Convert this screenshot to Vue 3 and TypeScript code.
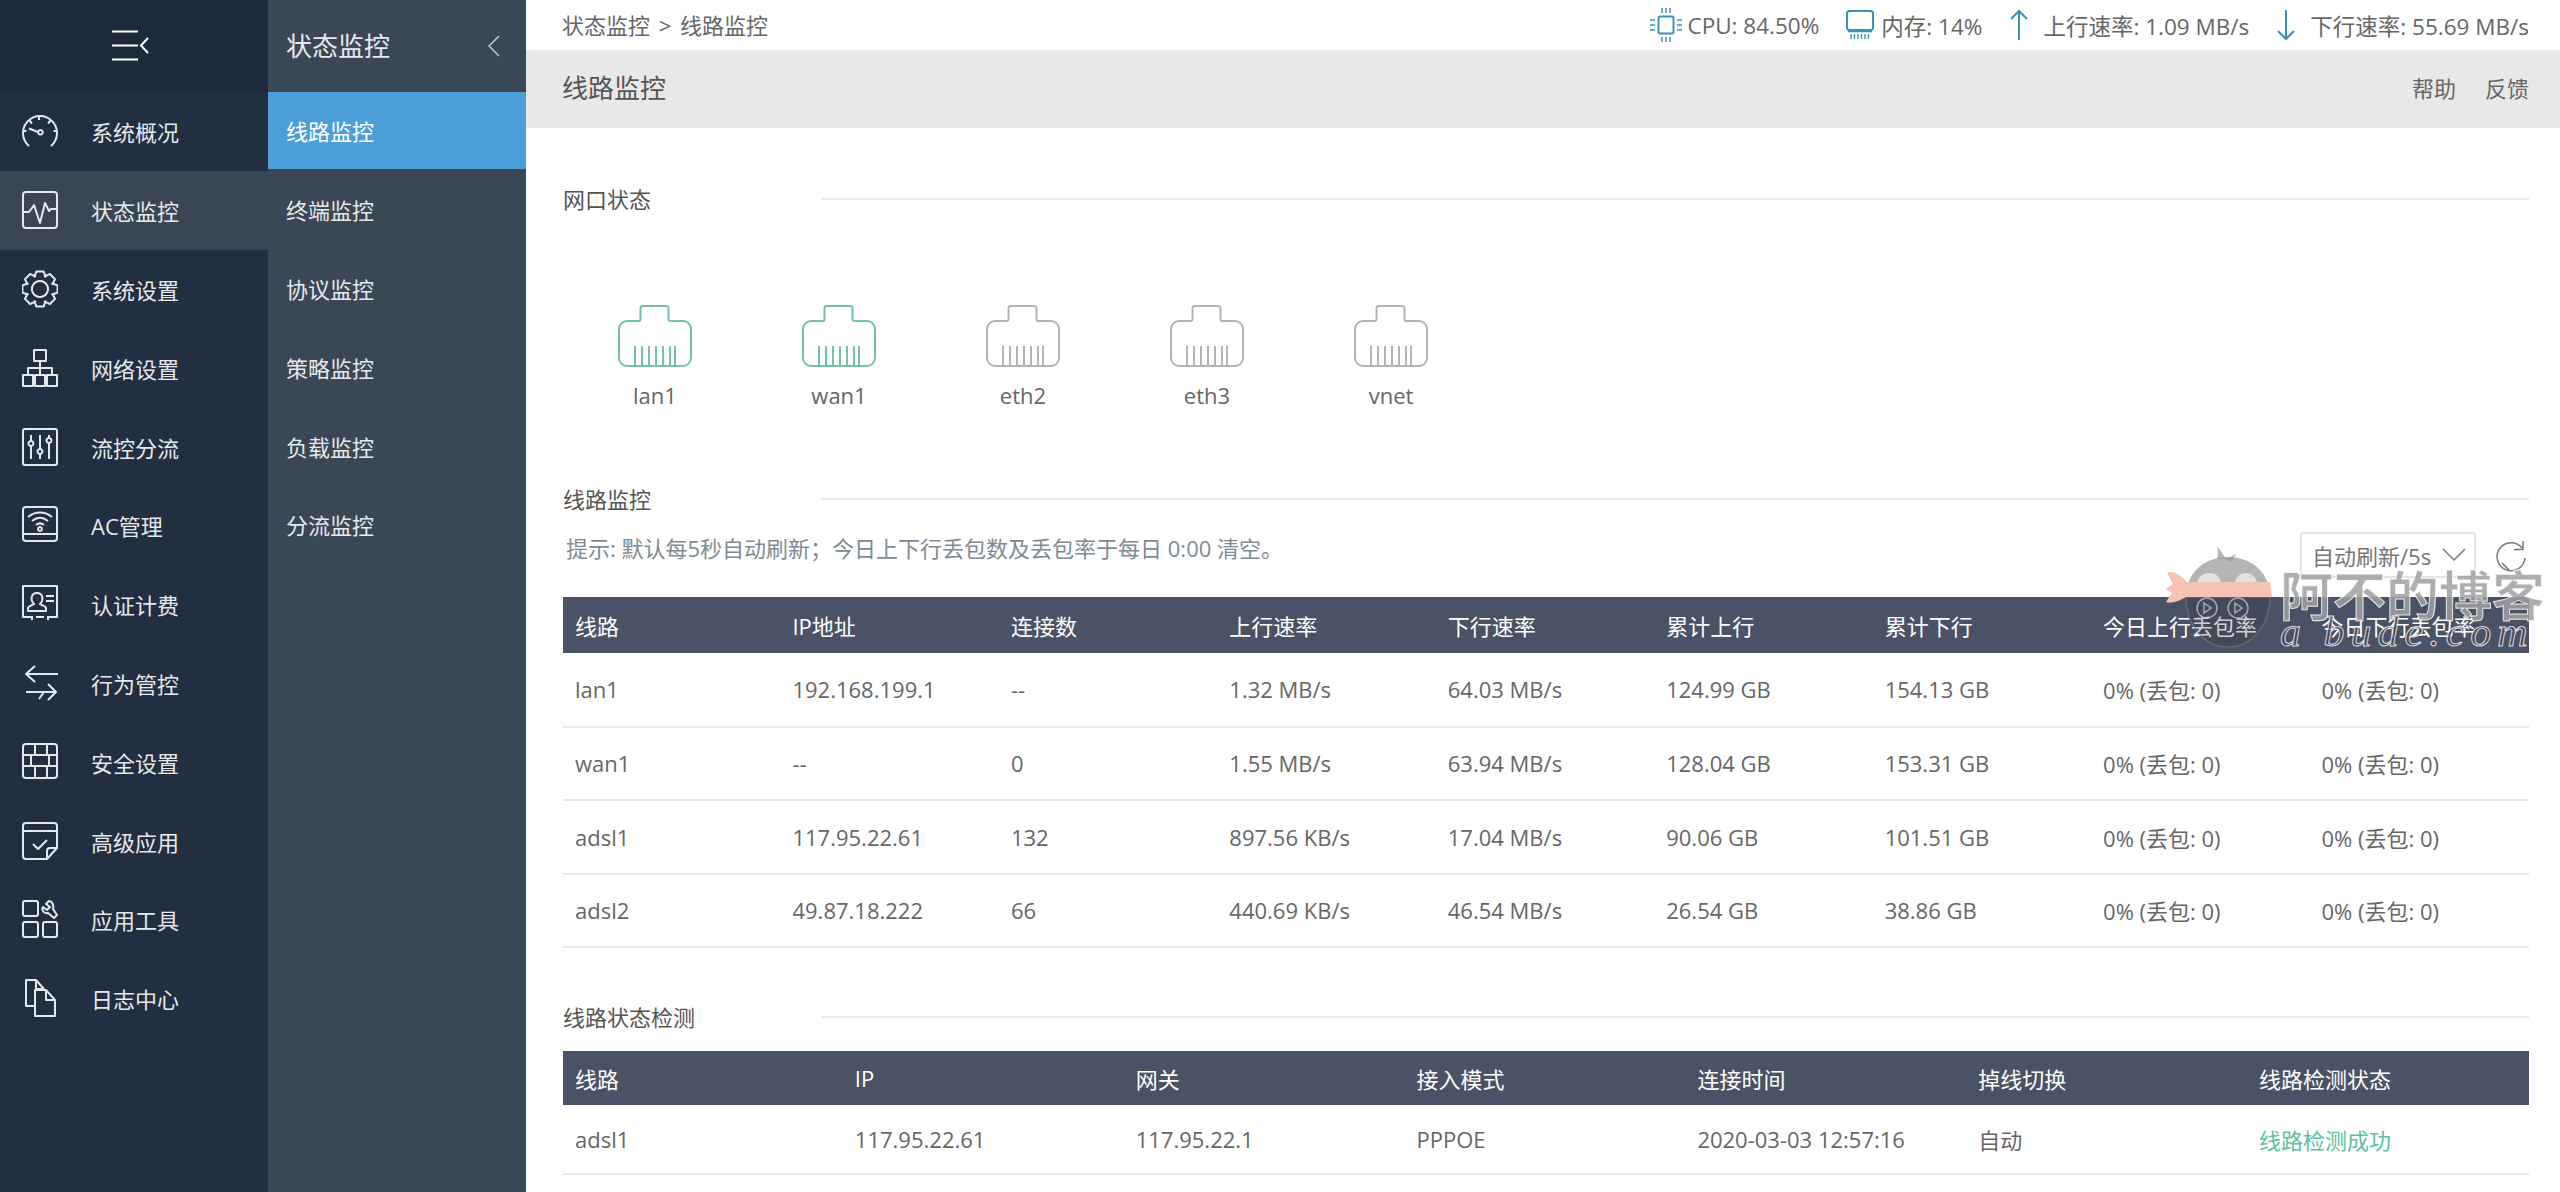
<template>
  <div class="app">
    <aside class="nav">
      <div class="nav-head">
        <svg class="toggle" viewBox="0 0 38 32" width="38" height="32">
          <path d="M0 1.5h26M0 15.5h26M0 29.5h26M36 8l-7 7.5 7 7.5" />
        </svg>
      </div>
      <ul class="nav-list">
        <li v-for="item in navItems" :key="item.label" class="nav-item" :class="{ active: item.label === '状态监控' }">
          <svg class="nav-icon" viewBox="0 0 36 38" width="36" height="38">
            <path v-for="(d, i) in item.icon" :key="i" :d="d" />
          </svg>
          <span>{{ item.label }}</span>
        </li>
      </ul>
    </aside>

    <aside class="subnav">
      <div class="subnav-head">
        <span>状态监控</span>
        <svg viewBox="0 0 12 22" width="12" height="22"><path d="M11 1 1 11l10 10" /></svg>
      </div>
      <ul class="subnav-list">
        <li v-for="(item, i) in subItems" :key="item" class="subnav-item" :class="{ active: i === 0 }">{{ item }}</li>
      </ul>
    </aside>

    <main class="main">
      <header class="topbar">
        <div class="crumb">状态监控 &gt; 线路监控</div>
        <div class="stats">
          <div class="stat stat-cpu">
            <svg viewBox="0 0 32 36" width="32" height="36">
              <path d="M10 9.5h12a1.5 1.5 0 0 1 1.5 1.5v14a1.5 1.5 0 0 1-1.5 1.5H10A1.5 1.5 0 0 1 8.5 25V11A1.5 1.5 0 0 1 10 9.5z" stroke-width="2" />
              <path d="M12 1v5M16 1v5M20 1v5M12 30v5M16 30v5M20 30v5M0 13h5M0 18h5M0 23h5M27 13h5M27 18h5M27 23h5" stroke-width="1.5" />
            </svg>
            <span>CPU: 84.50%</span>
          </div>
          <div class="stat stat-mem">
            <svg viewBox="0 0 28 32" width="28" height="32">
              <rect x="1" y="2" width="26" height="19" rx="2.5" stroke-width="2" />
              <path d="M2 22.5h24M5 25v5M8.5 25v5M12 25v5M15.5 25v5M19 25v5M22.5 25v5" stroke-width="1.3" />
            </svg>
            <span>内存: 14%</span>
          </div>
          <div class="stat stat-rate">
            <svg viewBox="0 0 20 32" width="20" height="32"><path d="M10 31V2M2 10l8-8 8 8" stroke-width="2" /></svg>
            <span>上行速率: 1.09 MB/s</span>
          </div>
          <div class="stat stat-rate">
            <svg viewBox="0 0 20 32" width="20" height="32"><path d="M10 1v29M2 22l8 8 8-8" stroke-width="2" /></svg>
            <span>下行速率: 55.69 MB/s</span>
          </div>
        </div>
      </header>

      <div class="titlebar">
        <h1>线路监控</h1>
        <div class="links"><a>帮助</a><a>反馈</a></div>
      </div>

      <div class="content">
        <section class="section-ports">
          <div class="sec-title"><span>网口状态</span><i></i></div>
          <div class="ports">
            <div v-for="p in ports" :key="p.name" class="port" :class="{ up: p.up }">
              <svg viewBox="0 0 74 62" width="74" height="62">
                <path d="M9 16h11.5a2 2 0 0 0 2-2V3a2 2 0 0 1 2-2h24a2 2 0 0 1 2 2v11a2 2 0 0 0 2 2H65a8 8 0 0 1 8 8v29a8 8 0 0 1-8 8H9a8 8 0 0 1-8-8V24a8 8 0 0 1 8-8z" />
                <path d="M17 41v20M24 41v20M31 41v20M38 41v20M45 41v20M52 41v20M57 41v20" />
              </svg>
              <span>{{ p.name }}</span>
            </div>
          </div>
        </section>

        <section class="section-lines">
          <div class="sec-title"><span>线路监控</span><i></i></div>
          <div class="notice">
            <span>提示: 默认每5秒自动刷新；今日上下行丢包数及丢包率于每日 0:00 清空。</span>
            <div class="controls">
              <div class="select">
                <span>自动刷新/5s</span>
                <svg viewBox="0 0 24 14" width="24" height="14"><path d="M1 1l11 11L23 1" /></svg>
              </div>
              <svg class="refresh" viewBox="0 0 36 36" width="36" height="36">
                <path d="M29 9A14 14 0 1 0 32 19M30 2v8.5h-9M9 24l7 7" />
              </svg>
            </div>
          </div>
          <table>
            <thead>
              <tr><th v-for="h in lineHead" :key="h">{{ h }}</th></tr>
            </thead>
            <tbody>
              <tr v-for="row in lineRows" :key="row[0]">
                <td v-for="(c, i) in row" :key="i">{{ c }}</td>
              </tr>
            </tbody>
          </table>
        </section>

        <section class="section-check">
          <div class="sec-title"><span>线路状态检测</span><i></i></div>
          <table class="check-table">
            <thead>
              <tr><th v-for="h in checkHead" :key="h">{{ h }}</th></tr>
            </thead>
            <tbody>
              <tr>
                <td>adsl1</td>
                <td>117.95.22.61</td>
                <td>117.95.22.1</td>
                <td>PPPOE</td>
                <td>2020-03-03 12:57:16</td>
                <td>自动</td>
                <td class="ok">线路检测成功</td>
              </tr>
            </tbody>
          </table>
        </section>
      </div>

      <div class="watermark">
        <svg viewBox="0 0 112 104" width="112" height="104">
          <path class="wm-hair" d="M60 14C57 9 54 5 51 1c1 4 1 8 0 13zM60 14l10-5-5 8z" />
          <path class="wm-head" d="M20 52C20 28 38 12 62 12s42 16 42 40z" />
          <path class="wm-low" d="M20 52c0 28 18 50 42 50s42-22 42-50z" />
          <path class="wm-band" d="M20 37h84l2 15H20z" />
          <path class="wm-band" d="M1 28c6-3 13 2 20 9l-1 15c-7 4-15 7-20 5l6-9-7-4 8-5z" />
          <path class="wm-eye" d="M31 37c2-6 7-9 13-9s10 4 11 9zM69 37c1-5 5-9 11-9 5 0 10 4 11 9z" />
          <circle class="wm-ring" cx="41" cy="63" r="10" />
          <circle class="wm-ring" cx="72" cy="63" r="10" />
          <path class="wm-ring" d="M38 58l7 5-7 5zM69 58l7 5-7 5z" />
        </svg>
        <div class="wm-text">
          <div class="wm-cn">阿不的博客</div>
          <div class="wm-en">a bude.com</div>
        </div>
      </div>
    </main>
  </div>
</template>

<script setup lang="ts">
// gear outline for the settings entry, 8 teeth round the centre of the icon box
const gearPath = (): string => {
  const points: string[] = []
  for (let i = 0; i < 8; i++) {
    const a = (i * Math.PI) / 4
    const spots: [number, number][] = [
      [13.5, -0.42],
      [18, -0.2],
      [18, 0.2],
      [13.5, 0.42],
    ]
    for (const [r, o] of spots) {
      const x = 18 + r * Math.cos(a + o)
      const y = 19 + r * Math.sin(a + o)
      points.push(`${x.toFixed(1)} ${y.toFixed(1)}`)
    }
  }
  return `M${points.join('L')}z`
}

const navItems: { label: string; icon: string[] }[] = [
  {
    label: '系统概况',
    icon: [
      'M7 34A17 17 0 1 1 29 34',
      'M17 4v4M7.5 8.5l2.5 3M28.5 8.5l-2.5 3M1.5 19h3M31.5 19h3',
      'M7 16.5l9 3.5',
      'M18.5 18a2.3 2.3 0 1 1-.1 0z',
    ],
  },
  {
    label: '状态监控',
    icon: [
      'M4 1h28a3 3 0 0 1 3 3v30a3 3 0 0 1-3 3H4a3 3 0 0 1-3-3V4a3 3 0 0 1 3-3z',
      'M1 21h6l5-7 6 18 5-20 4 8 2-2h6',
    ],
  },
  {
    label: '系统设置',
    icon: [gearPath(), 'M18 11a8 8 0 1 1-.1 0z'],
  },
  {
    label: '网络设置',
    icon: [
      'M12 1h12v11H12zM1 26h10v11H1zM13 26h10v11H13zM25 26h10v11H25z',
      'M18 12v7M6 26v-7h24v7M18 19v7',
    ],
  },
  {
    label: '流控分流',
    icon: [
      'M3 1h30a2 2 0 0 1 2 2v32a2 2 0 0 1-2 2H3a2 2 0 0 1-2-2V3a2 2 0 0 1 2-2z',
      'M9 7v6M9 18v13M18 7v14M18 26v5M27 7v3M27 15v16',
      'M9 13a2.5 2.5 0 1 1-.1 0zM18 21a2.5 2.5 0 1 1-.1 0zM27 10a2.5 2.5 0 1 1-.1 0z',
    ],
  },
  {
    label: 'AC管理',
    icon: [
      'M4 1h28a3 3 0 0 1 3 3v28a3 3 0 0 1-3 3H4a3 3 0 0 1-3-3V4a3 3 0 0 1 3-3z',
      'M1 28h34',
      'M6 11c7-6 17-6 24 0M10 15c5-4 11-4 16 0M14 19c2.5-2 5.5-2 8 0',
      'M18 21a2 2 0 1 1-.1 0z',
    ],
  },
  {
    label: '认证计费',
    icon: [
      'M9 32H1V1h34v31h-8M14 32h8',
      'M10 31v4M26 31v4',
      'M6 26v-3c0-2 5-3 6-4-4-4-3-11 3-11s7 7 3 11c1 1 6 2 6 4v3z',
      'M24 11h8M24 16h8',
    ],
  },
  {
    label: '行为管控',
    icon: [
      'M36 10H4M13 2l-9 8 9 8',
      'M4 28h30M26 20l8 8-8 8M22 28l-5 7',
    ],
  },
  {
    label: '安全设置',
    icon: [
      'M4 1h28a3 3 0 0 1 3 3v28a3 3 0 0 1-3 3H4a3 3 0 0 1-3-3V4a3 3 0 0 1 3-3z',
      'M1 12h34M1 23h34M13 1v11M25 1v11M9 12v11M27 12v11M13 23v12M25 23v12',
    ],
  },
  {
    label: '高级应用',
    icon: [
      'M25 37H4a3 3 0 0 1-3-3V4a3 3 0 0 1 3-3h28a3 3 0 0 1 3 3v22z',
      'M1 9h34',
      'M11 22l5 5 9-9',
      'M35 26h-7a3 3 0 0 0-3 3v8',
    ],
  },
  {
    label: '应用工具',
    icon: [
      'M3 1h11a2 2 0 0 1 2 2v11a2 2 0 0 1-2 2H3a2 2 0 0 1-2-2V3a2 2 0 0 1 2-2z',
      'M3 22h11a2 2 0 0 1 2 2v11a2 2 0 0 1-2 2H3a2 2 0 0 1-2-2V24a2 2 0 0 1 2-2z',
      'M23 22h10a2 2 0 0 1 2 2v11a2 2 0 0 1-2 2H23a2 2 0 0 1-2-2V24a2 2 0 0 1 2-2z',
      'M27 1l-3 3 4 3-3 3-4-3c-2 3 1 7 5 6l6 5 3-3-4-6c1-4-1-8-4-8z',
    ],
  },
  {
    label: '日志中心',
    icon: [
      'M12 27H4V1h10l8 9',
      'M14 1v9h8',
      'M13 11h11l9 10v16H13z',
      'M24 11v10h9',
    ],
  },
]

const subItems = ['线路监控', '终端监控', '协议监控', '策略监控', '负载监控', '分流监控']

const ports = [
  { name: 'lan1', up: true },
  { name: 'wan1', up: true },
  { name: 'eth2', up: false },
  { name: 'eth3', up: false },
  { name: 'vnet', up: false },
]

const lineHead = ['线路', 'IP地址', '连接数', '上行速率', '下行速率', '累计上行', '累计下行', '今日上行丢包率', '今日下行丢包率']

const lineRows = [
  ['lan1', '192.168.199.1', '--', '1.32 MB/s', '64.03 MB/s', '124.99 GB', '154.13 GB', '0% (丢包: 0)', '0% (丢包: 0)'],
  ['wan1', '--', '0', '1.55 MB/s', '63.94 MB/s', '128.04 GB', '153.31 GB', '0% (丢包: 0)', '0% (丢包: 0)'],
  ['adsl1', '117.95.22.61', '132', '897.56 KB/s', '17.04 MB/s', '90.06 GB', '101.51 GB', '0% (丢包: 0)', '0% (丢包: 0)'],
  ['adsl2', '49.87.18.222', '66', '440.69 KB/s', '46.54 MB/s', '26.54 GB', '38.86 GB', '0% (丢包: 0)', '0% (丢包: 0)'],
]

const checkHead = ['线路', 'IP', '网关', '接入模式', '连接时间', '掉线切换', '线路检测状态']
</script>

<style>
html,
body {
  margin: 0;
  background: #fff;
}
</style>

<style scoped>
.app {
  display: flex;
  height: 1192px;
  overflow: hidden;
  font-family: "Open Sans", "Noto Sans CJK SC", sans-serif;
  font-size: 22px;
  color: #666;
}

ul {
  margin: 0;
  padding: 0;
  list-style: none;
}

/* first level menu */
.nav {
  flex: 0 0 268px;
  background: #212f40;
  color: #e6e9ec;
}

.nav-head {
  height: 92px;
  background: #1d2a39;
  display: flex;
  align-items: center;
  justify-content: center;
  padding-right: 6px;
  box-sizing: border-box;
}

.toggle path {
  fill: none;
  stroke: #fff;
  stroke-width: 2;
}

.nav-item {
  height: 78.8px;
  display: flex;
  align-items: center;
  gap: 33px;
  padding-left: 22px;
}

.nav-item.active {
  background: #3a4654;
}

.nav-icon {
  flex: none;
}

.nav-icon path {
  fill: none;
  stroke: #e6e9ec;
  stroke-width: 2;
  stroke-linejoin: round;
}

/* second level menu */
.subnav {
  flex: 0 0 258px;
  background: #3a4755;
  color: #e6e9ec;
}

.subnav-head {
  height: 92px;
  display: flex;
  align-items: center;
  justify-content: space-between;
  padding: 0 26px 3px 18px;
  font-size: 26px;
  box-sizing: border-box;
}

.subnav-head svg {
  margin-top: 3px;
}

.subnav-head path {
  fill: none;
  stroke: #c7ccd2;
  stroke-width: 1.5;
}

.subnav-item {
  height: 78.8px;
  box-sizing: border-box;
  display: flex;
  align-items: center;
  padding: 0 0 2px 18px;
}

.subnav-item.active {
  height: 77px;
  margin-bottom: 1.8px;
  background: #4c9ed9;
  color: #fff;
}

/* main area */
.main {
  position: relative;
  flex: 1;
  min-width: 0;
}

.topbar {
  height: 50px;
  box-sizing: border-box;
  display: flex;
  align-items: center;
  justify-content: space-between;
  padding: 0 31px 2px 36px;
}

.crumb {
  word-spacing: 3px;
}

.stats {
  display: flex;
  align-items: center;
  gap: 27px;
  font-size: 22.5px;
  margin-top: 2px;
}

.stat {
  display: flex;
  align-items: center;
  gap: 5px;
}

.stat svg {
  fill: none;
  stroke: #3a93b3;
}

.stat-mem {
  gap: 7px;
}

.stat-rate {
  gap: 14px;
}

.titlebar {
  height: 78px;
  box-sizing: border-box;
  background: #e8e8e8;
  display: flex;
  align-items: center;
  justify-content: space-between;
  padding: 0 31px 4px 36px;
}

.titlebar h1 {
  margin: 0;
  font-size: 26px;
  font-weight: 400;
  color: #555;
}

.links {
  display: flex;
  gap: 29px;
}

.content {
  padding: 56px 31px 0 37px;
}

.sec-title {
  display: flex;
  align-items: center;
  height: 30px;
  color: #555;
}

.sec-title span {
  flex: 0 0 258px;
  padding-bottom: 2px;
}

.sec-title i {
  flex: 1;
  height: 1.5px;
  background: #e8e8e8;
}

.ports {
  display: flex;
  margin-top: 91px;
}

.port {
  width: 184px;
  display: flex;
  flex-direction: column;
  align-items: center;
  gap: 13px;
  line-height: 30px;
}

.port svg {
  fill: none;
  stroke: #b4b4b4;
  stroke-width: 2;
}

.port.up svg {
  stroke: #74c2a5;
}

.section-lines {
  margin-top: 74px;
}

.notice {
  display: flex;
  align-items: center;
  justify-content: space-between;
  height: 46px;
  margin-top: 10px;
  padding-left: 3px;
  color: #7e8a93;
}

.controls {
  display: flex;
  align-items: center;
  gap: 17px;
  margin-top: 16px;
}

.select {
  width: 176px;
  height: 46px;
  box-sizing: border-box;
  border: 2px solid #e2e2e2;
  border-radius: 3px;
  display: flex;
  align-items: center;
  justify-content: space-between;
  padding: 0 8px 0 10px;
  color: #777;
  white-space: nowrap;
}

.select path,
.refresh path {
  fill: none;
  stroke: #777;
  stroke-width: 1.5;
}

.refresh {
  margin-top: 4px;
}

table {
  width: 100%;
  margin-top: 27px;
  table-layout: fixed;
  border-collapse: collapse;
}

th {
  height: 56px;
  padding: 0 0 0 11px;
  background: #4a5365;
  color: #fff;
  font-weight: 400;
  text-align: left;
}

td {
  height: 73.5px;
  padding: 0 0 0 11px;
  border-bottom: 2px solid #e8e8e8;
  box-sizing: border-box;
  white-space: nowrap;
}

th:first-child,
td:first-child {
  padding-left: 12px;
}

.section-check {
  margin-top: 54px;
}

.check-table {
  margin-top: 19px;
}

.check-table td {
  height: 69px;
}

.check-table th {
  height: 54px;
}

td.ok {
  color: #5cc2a0;
}

/* blog watermark sits on top of the page */
.watermark {
  position: absolute;
  left: 1640px;
  top: 545px;
  display: flex;
  align-items: flex-start;
  pointer-events: none;
}

.wm-hair,
.wm-head {
  fill: rgba(150, 150, 150, 0.7);
}

.wm-low {
  fill: rgba(40, 40, 50, 0.22);
  stroke: rgba(120, 120, 130, 0.6);
  stroke-width: 1.5;
}

.wm-band {
  fill: #f6c3b5;
}

.wm-eye {
  fill: rgba(255, 255, 255, 0.6);
}

.wm-ring {
  fill: none;
  stroke: rgba(210, 210, 215, 0.7);
  stroke-width: 1.5;
}

.wm-text {
  margin: 30px 0 0 2px;
  width: 280px;
}

.wm-cn {
  font-size: 53px;
  line-height: 42px;
  font-weight: 700;
  white-space: nowrap;
  color: rgba(160, 160, 160, 0.85);
  -webkit-text-stroke: 1px rgba(255, 255, 255, 0.8);
}

.wm-en {
  margin-top: -5px;
  font-family: "Liberation Serif", serif;
  font-style: italic;
  font-size: 42px;
  line-height: 40px;
  letter-spacing: 6px;
  white-space: nowrap;
  color: rgba(70, 70, 80, 0.75);
  -webkit-text-stroke: 1px rgba(255, 255, 255, 0.8);
}
</style>
